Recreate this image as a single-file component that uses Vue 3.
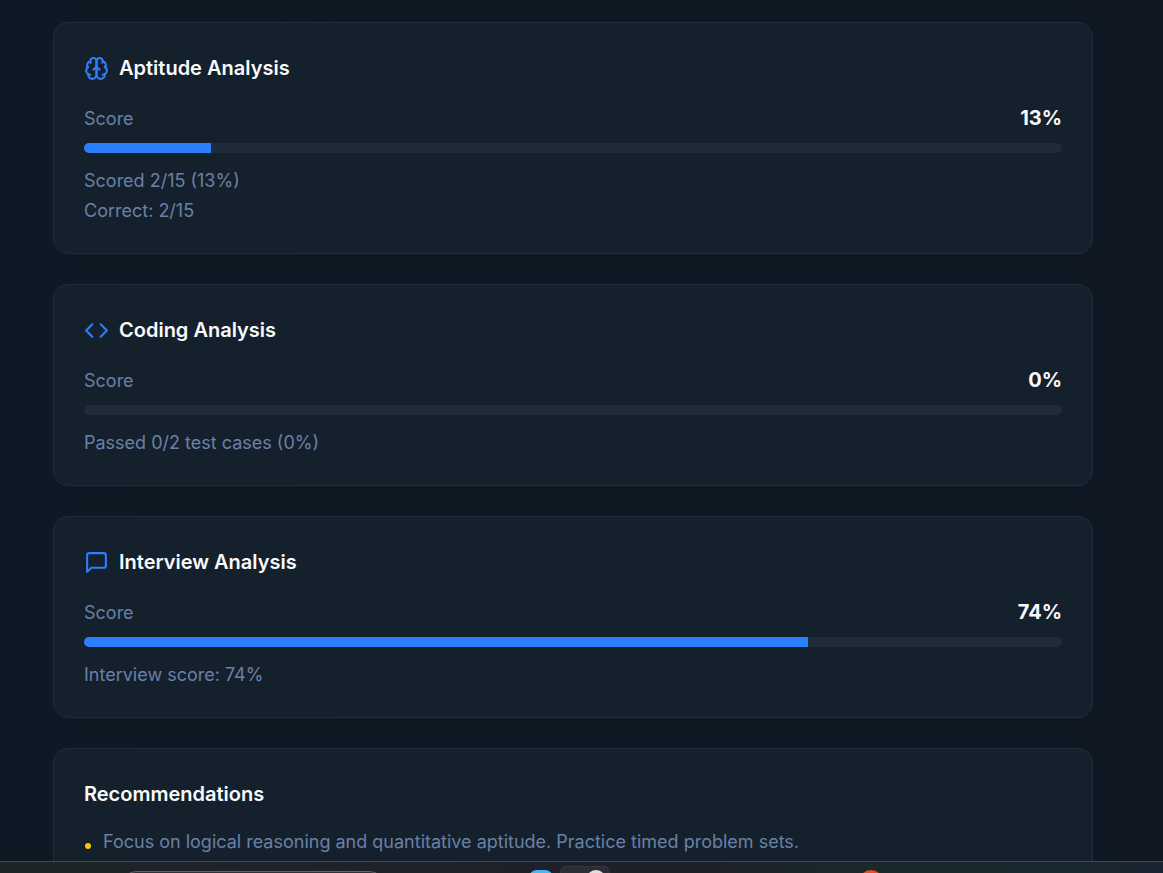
<script setup>
const sections = [
  { id: 'aptitude', title: 'Aptitude Analysis', score: 13, notes: ['Scored 2/15 (13%)', 'Correct: 2/15'] },
  { id: 'coding', title: 'Coding Analysis', score: 0, notes: ['Passed 0/2 test cases (0%)'] },
  { id: 'interview', title: 'Interview Analysis', score: 74, notes: ['Interview score: 74%'] },
]
const recommendations = ['Focus on logical reasoning and quantitative aptitude. Practice timed problem sets.']
const icons = {
  aptitude: [
    'M12 5a3 3 0 1 0-5.997.125 4 4 0 0 0-2.526 5.77 4 4 0 0 0 .556 6.588A4 4 0 1 0 12 18Z',
    'M12 5a3 3 0 1 1 5.997.125 4 4 0 0 1 2.526 5.77 4 4 0 0 1-.556 6.588A4 4 0 1 1 12 18Z',
    'M15 13a4.5 4.5 0 0 1-3-4 4.5 4.5 0 0 1-3 4',
    'M17.599 6.5a3 3 0 0 0 .399-1.375',
    'M6.003 5.125A3 3 0 0 0 6.401 6.5',
    'M3.477 10.896a4 4 0 0 1 .585-.396',
    'M19.938 10.5a4 4 0 0 1 .585.396',
    'M6 18a4 4 0 0 1-1.967-.516',
    'M19.967 17.484A4 4 0 0 1 18 18',
  ],
  coding: ['m16 18 6-6-6-6', 'm8 6-6 6 6 6'],
  interview: ['M21 15a2 2 0 0 1-2 2H7l-4 4V5a2 2 0 0 1 2-2h14a2 2 0 0 1 2 2z'],
}
</script>

<template>
  <div class="screen">
    <main class="report">
      <section v-for="s in sections" :key="s.id" class="card">
        <h2 class="title">
          <svg class="icon" viewBox="0 0 24 24" aria-hidden="true">
            <path v-for="d in icons[s.id]" :key="d" :d="d" />
          </svg>
          {{ s.title }}
        </h2>
        <div class="score">
          <span>Score</span>
          <strong>{{ s.score }}%</strong>
        </div>
        <div class="track" role="progressbar" :aria-label="s.title" :aria-valuenow="s.score" aria-valuemin="0" aria-valuemax="100">
          <div class="fill" :style="{ width: s.score + '%' }"></div>
        </div>
        <div class="notes">
          <p v-for="n in s.notes" :key="n">{{ n }}</p>
        </div>
      </section>
      <section class="card">
        <h2 class="title">Recommendations</h2>
        <ul class="tips">
          <li v-for="r in recommendations" :key="r">{{ r }}</li>
        </ul>
      </section>
    </main>
    <footer class="taskbar">
      <span class="search"></span>
      <span class="app blue"></span>
      <span class="active"><span class="app white"></span></span>
      <span class="app red"></span>
    </footer>
  </div>
</template>

<style>
body {
  margin: 0;
  background: #0e1823;
}
</style>

<style scoped>
.screen {
  display: flex;
  flex-direction: column;
  height: 100vh;
  overflow: hidden;
  background: linear-gradient(90deg, #0d1924, #0e1722);
  color: #6a81a6;
  font-family: Inter, "Liberation Sans", sans-serif;
  font-size: 18px;
  line-height: 25px;
}
.report {
  display: flex;
  flex: 1;
  flex-direction: column;
  gap: 30px;
  min-height: 0;
  padding: 22px 70px 0 53px;
  overflow: hidden;
}
.card {
  flex: none;
  padding: 30px;
  border: 1px solid #212d3d;
  border-radius: 15px;
  background: #15202d;
}
.title {
  display: flex;
  align-items: center;
  gap: 10px;
  margin: 0 0 20px;
  color: #f8fafc;
  font-size: 20px;
  font-weight: 600;
  line-height: 30px;
}
.icon {
  width: 25px;
  height: 25px;
  fill: none;
  stroke: #2b7fff;
  stroke-width: 2;
  stroke-linecap: round;
  stroke-linejoin: round;
}
.score {
  display: flex;
  align-items: baseline;
  justify-content: space-between;
  height: 30px;
  margin-bottom: 10px;
  line-height: 30px;
}
.score strong {
  color: #f8fafc;
  font-size: 20px;
  font-weight: 700;
}
.track {
  height: 10px;
  overflow: hidden;
  border-radius: 5px;
  background: #1f2b3b;
}
.fill {
  height: 100%;
  background: #2b7fff;
}
.notes {
  display: grid;
  gap: 5px;
  margin-top: 15px;
}
.notes p {
  margin: 0;
}
.tips {
  margin: 0;
  padding: 0 0 50px;
  list-style: none;
}
.tips li {
  display: flex;
  align-items: center;
  gap: 12px;
}
.tips li::before {
  width: 6px;
  height: 6px;
  margin: 8px 0 0 1px;
  border-radius: 50%;
  background: #fcc800;
  content: "";
}
.taskbar {
  position: relative;
  flex: none;
  height: 11px;
  overflow: hidden;
  border-top: 1px solid #414a50;
  background: linear-gradient(90deg, #1c2526, #1e232a 20%, #20212a 35%, #1d2128 60%, #182a2c 78%, #18272e 90%, #1b2431);
}
.search,
.active,
.app {
  position: absolute;
}
.search {
  top: 9px;
  left: 122px;
  width: 262px;
  height: 34px;
  box-sizing: border-box;
  border: 1px solid #636266;
  border-radius: 14px;
  background: #323338;
}
.active {
  top: 4px;
  left: 560px;
  width: 48px;
  height: 44px;
  border: 1px solid #34383d;
  border-radius: 6px;
  background: #2b2e34;
}
.app {
  top: 8px;
  width: 24px;
  height: 24px;
  border-radius: 50%;
}
.blue {
  left: 529px;
  border-radius: 8px;
  background: #45b8f5;
}
.white {
  top: 3px;
  left: 25px;
  width: 20px;
  height: 20px;
  background: #e2dfdf;
}
.red {
  left: 859px;
  background: #ee4b1e;
}
</style>
